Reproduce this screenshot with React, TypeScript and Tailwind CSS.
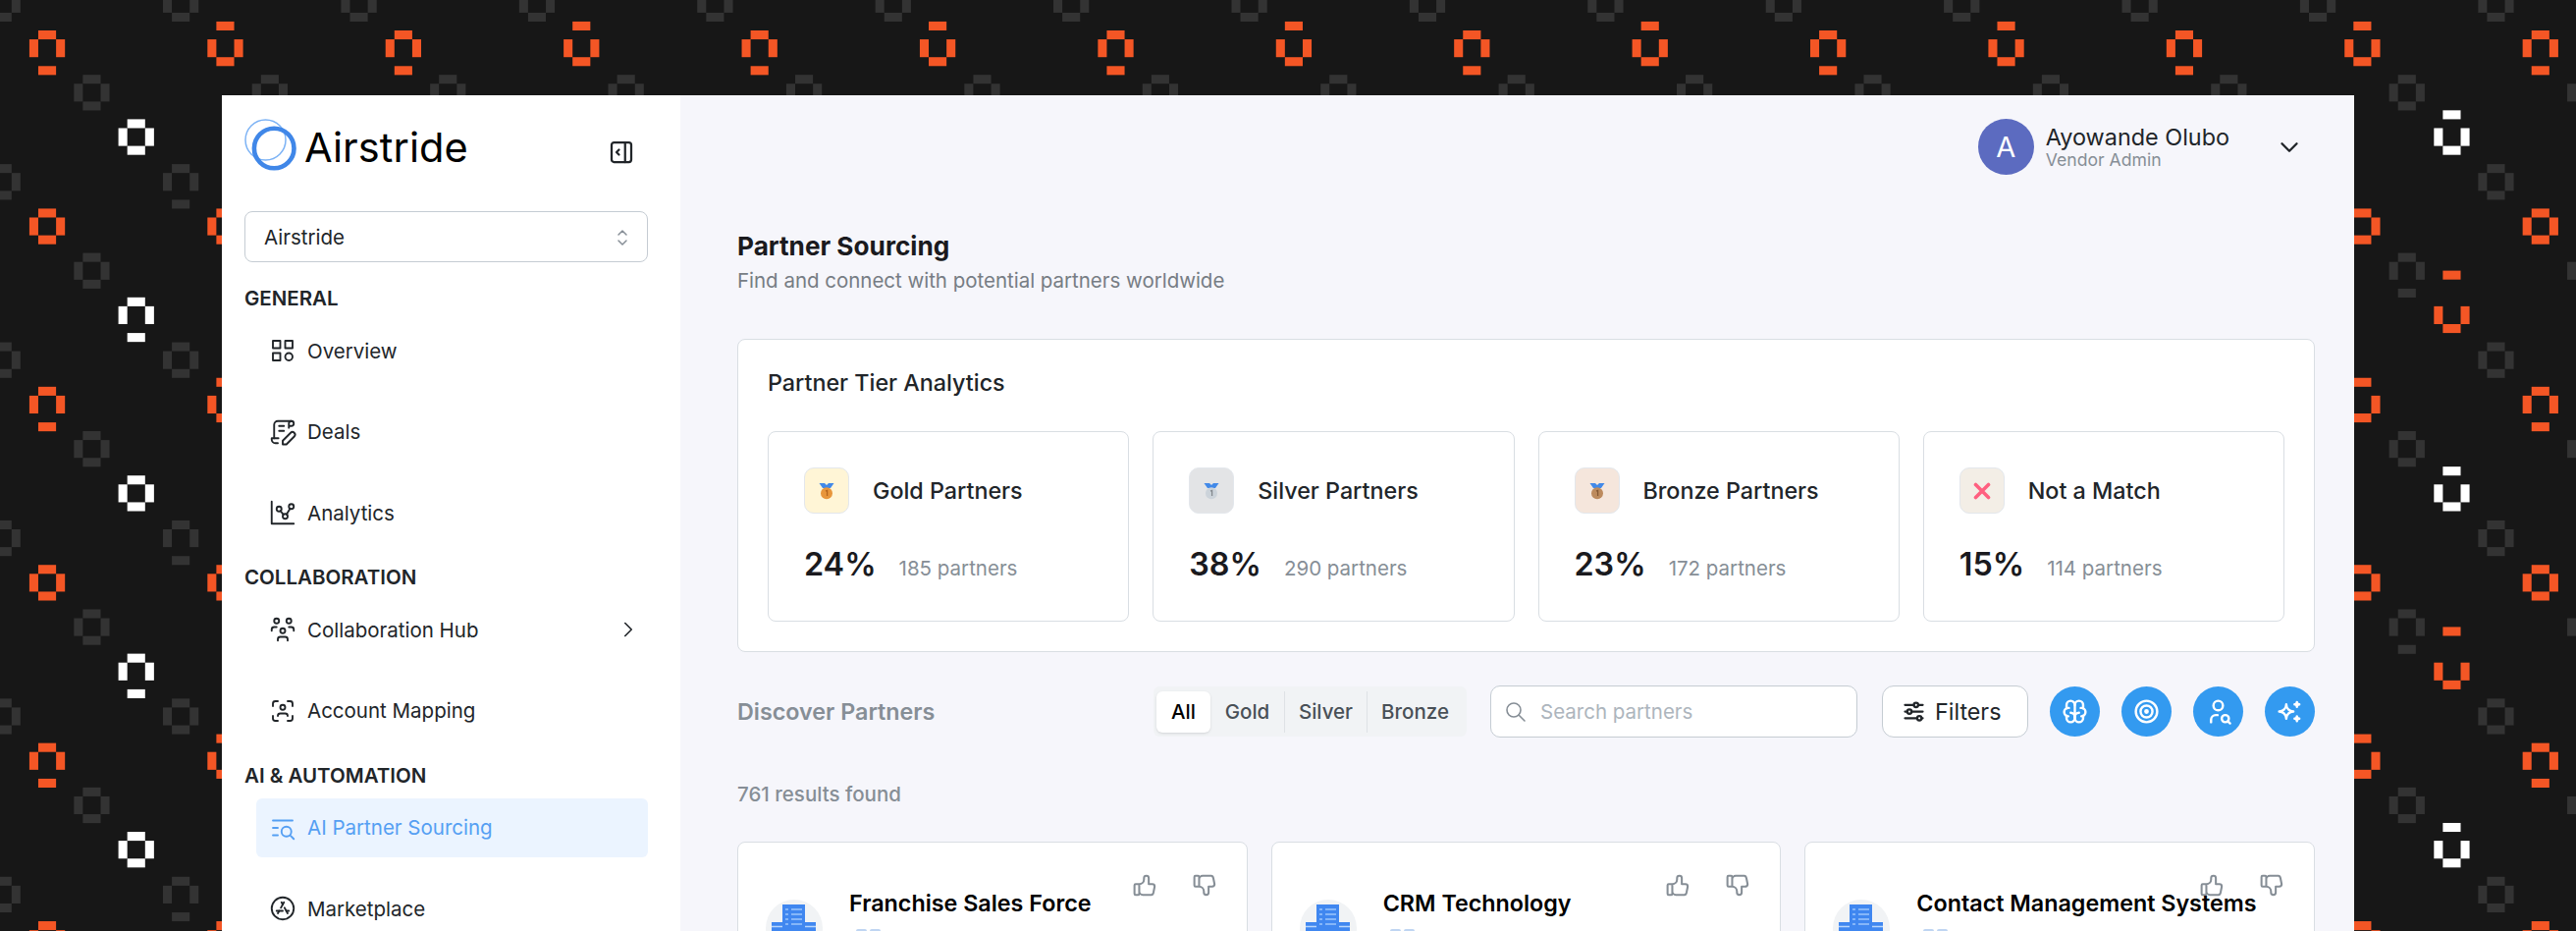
import type { IconType } from 'react-icons'
import {
  TbAdjustmentsHorizontal,
  TbBrain,
  TbBrandAppstore,
  TbCategory,
  TbChartDots,
  TbChevronDown,
  TbChevronRight,
  TbContract,
  TbLayoutSidebarRightExpand,
  TbListSearch,
  TbSearch,
  TbSelector,
  TbSparkles,
  TbTarget,
  TbThumbDown,
  TbThumbUp,
  TbUserScan,
  TbUserSearch,
  TbUsersGroup,
} from 'react-icons/tb'

type NavItem = { label: string; icon: IconType; active?: boolean; expandable?: boolean }
type NavSection = { title: string; items: NavItem[] }
type Medal = 'gold' | 'silver' | 'bronze' | 'none'
type Tier = { name: string; percent: string; count: string; medal: Medal; tint: string }

const navSections: NavSection[] = [
  {
    title: 'GENERAL',
    items: [
      { label: 'Overview', icon: TbCategory },
      { label: 'Deals', icon: TbContract },
      { label: 'Analytics', icon: TbChartDots },
    ],
  },
  {
    title: 'COLLABORATION',
    items: [
      { label: 'Collaboration Hub', icon: TbUsersGroup, expandable: true },
      { label: 'Account Mapping', icon: TbUserScan },
    ],
  },
  {
    title: 'AI & AUTOMATION',
    items: [
      { label: 'AI Partner Sourcing', icon: TbListSearch, active: true },
      { label: 'Marketplace', icon: TbBrandAppstore },
    ],
  },
]

const tiers: Tier[] = [
  { name: 'Gold Partners', percent: '24%', count: '185 partners', medal: 'gold', tint: 'bg-[#fff5d6]' },
  { name: 'Silver Partners', percent: '38%', count: '290 partners', medal: 'silver', tint: 'bg-[#e3e4e6]' },
  { name: 'Bronze Partners', percent: '23%', count: '172 partners', medal: 'bronze', tint: 'bg-[#f5e6dc]' },
  { name: 'Not a Match', percent: '15%', count: '114 partners', medal: 'none', tint: 'bg-[#f3eee6]' },
]

const partners = ['Franchise Sales Force', 'CRM Technology', 'Contact Management Systems']
const quickActions = [TbBrain, TbTarget, TbUserSearch, TbSparkles]

// ─── Backdrop ───

const UNIT = 9.07
const STEP = 181.41

type Glyph = { x: number; y: number; fill: string; up?: number; down?: number }

const range = (from: number, to: number) => Array.from({ length: to - from + 1 }, (_, i) => from + i)

const glyphs: Glyph[] = [
  ...range(0, 14).flatMap((col) =>
    range(0, 5).map((row) => ({
      x: 29.9 + col * STEP,
      y: 31 + row * STEP,
      fill: '#f45625',
      up: row % 2 === 0 && col % 2 === 1 ? 1 : 0,
      down: row % 2 === 0 && col % 2 === 0 ? 1 : 0,
    })),
  ),
  ...range(0, 14).flatMap((col) =>
    range(0, 4).map((row) => ({
      x: 75.3 + col * STEP,
      y: 76.2 + row * STEP,
      fill: '#333333',
      down: col === 13 && row % 2 === 1 ? 1 : 0,
    })),
  ),
  ...range(-1, 13).flatMap((col) =>
    range(0, 5).map((row) => ({
      x: 166 + col * STEP,
      y: -14.3 + row * STEP,
      fill: '#333333',
      down: col === 0 && row % 2 === 1 ? 1 : 0,
    })),
  ),
  ...range(0, 4).map((row) => ({ x: 120.6, y: 121.4 + row * STEP, fill: '#ffffff', down: row % 2 })),
  ...range(0, 4).map((row) => ({
    x: 2479.3,
    y: 121.4 + row * STEP,
    fill: row % 2 ? '#f45625' : '#ffffff',
    up: row % 2 ? 3 : 1,
  })),
]

const Backdrop = () => (
  <svg className="absolute inset-0" width="2624" height="948" viewBox="0 0 2624 948">
    {glyphs.map(({ x, y, fill, up = 0, down = 0 }, i) => (
      <g key={i} fill={fill} transform={`translate(${x} ${y})`}>
        <rect x={UNIT} y={-up * UNIT} width={UNIT * 2} height={UNIT} />
        <rect x={0} y={UNIT} width={UNIT} height={UNIT * 2} />
        <rect x={UNIT * 3} y={UNIT} width={UNIT} height={UNIT * 2} />
        <rect x={UNIT} y={(3 + down) * UNIT} width={UNIT * 2} height={UNIT} />
      </g>
    ))}
  </svg>
)

// ─── Drawings ───

const LogoMark = () => (
  <svg width="54" height="54" viewBox="0 0 54 54" fill="none">
    <circle cx="21.5" cy="21.5" r="20.5" stroke="#7db3f5" strokeWidth="1.5" />
    <circle cx="30.2" cy="30" r="20.3" stroke="#4087e8" strokeWidth="4.6" />
  </svg>
)

const medalColors = {
  gold: { disc: '#e8963c', mark: '#b5651d' },
  silver: { disc: '#ccd3da', mark: '#84898f' },
  bronze: { disc: '#bd8b5e', mark: '#855a34' },
}

const MedalIcon = ({ medal }: { medal: Medal }) => {
  if (medal === 'none') {
    return (
      <svg width="18" height="18" viewBox="0 0 18 18" fill="none">
        <path d="M2.5 2.5 15.5 15.5M15.5 2.5 2.5 15.5" stroke="#ff6080" strokeWidth="3.6" strokeLinecap="round" />
      </svg>
    )
  }
  const { disc, mark } = medalColors[medal]
  return (
    <svg width="18" height="18" viewBox="0 0 18 18">
      <path d="M1.5 1h5.5l2 2L11 1h5.5L13 6H5z" fill="#4289e8" />
      <circle cx="9" cy="11.2" r="6" fill={disc} />
      <path d="M8 9.2 9.6 8.5V14" stroke={mark} strokeWidth="1.3" fill="none" />
    </svg>
  )
}

const BuildingIcon = () => (
  <svg width="60" height="60" viewBox="0 0 60 60">
    <circle cx="31" cy="30" r="29" fill="#f1f3f5" />
    <path d="M19 6h23v54H19z" fill="#4087f0" />
    <path d="M8 24h45v36H8z" fill="#4087f0" />
    <path d="M22 11h3m3 0h11M22 16h3m3 0h11M22 21h3m3 0h11M22 26h3m3 0h11" stroke="#9cc6fb" strokeWidth="1.6" />
    <path d="M8 28.5h11M42 28.5h11" stroke="#b9d7fc" strokeWidth="1.6" />
  </svg>
)

// ─── Layout ───

const Sidebar = () => (
  <aside className="flex w-[467px] shrink-0 flex-col bg-white pl-[23px] pr-[33px] pt-6">
    <div className="flex h-[54px] items-start">
      <LogoMark />
      <span className="ml-[7px] text-[41.5px] leading-[59px] tracking-[0.1px] text-black">Airstride</span>
      <TbLayoutSidebarRightExpand size={30} strokeWidth={1.8} className="ml-auto mr-3 mt-[19px]" />
    </div>
    <div className="mt-10 flex h-[52px] shrink-0 items-center justify-between rounded-lg border-[1.5px] border-[#c5ccd3] pl-[19px] pr-[13px] pt-px">
      <span>Airstride</span>
      <TbSelector size={24} strokeWidth={1.5} className="text-[#868e96]" />
    </div>
    <nav className="mt-[13px] flex flex-col gap-3">
      {navSections.map((section) => (
        <section key={section.title}>
          <h2 className="h-[47px] font-semibold leading-[47px]">{section.title}</h2>
          <ul className="flex flex-col gap-[22.5px] pl-3">
            {section.items.map(({ label, icon: Icon, active, expandable }) => (
              <li
                key={label}
                className={`flex h-[60px] items-center rounded-md pl-3 ${active ? 'bg-[#ebf4ff] text-[#559ff3]' : ''}`}
              >
                <Icon size={30} strokeWidth={1.5} />
                <span className="ml-[10px] mt-px">{label}</span>
                {expandable && <TbChevronRight size={26} strokeWidth={1.5} className="ml-auto mr-[7px]" />}
              </li>
            ))}
          </ul>
        </section>
      ))}
    </nav>
  </aside>
)

const UserBar = () => (
  <header className="flex h-[57px] items-center">
    <div className="ml-auto flex size-[57px] items-center justify-center rounded-full bg-[#5c6bc0] text-[29px] text-white">
      A
    </div>
    <div className="ml-3 flex flex-col">
      <span className="text-[23.4px] leading-[26px]">Ayowande Olubo</span>
      <span className="text-[17.6px] leading-5 text-[#868e96]">Vendor Admin</span>
    </div>
    <TbChevronDown size={30} strokeWidth={1.9} className="ml-[46px] mr-[11px]" />
  </header>
)

const TierAnalytics = () => (
  <section className="mt-[44px] h-[319px] rounded-lg border-[1.5px] border-[#d9dee3] bg-white px-[30px] pt-[26px]">
    <h2 className="text-[23.3px] font-medium leading-9">Partner Tier Analytics</h2>
    <div className="mt-[31px] grid grid-cols-4 gap-6">
      {tiers.map((tier) => (
        <article key={tier.name} className="h-[194px] rounded-lg border-[1.5px] border-[#d9dee3] pl-9 pt-9">
          <div className="flex items-center">
            <div className={`flex h-[47px] w-[46px] items-center justify-center rounded-[10px] border-[1.5px] border-[#e3e7ec] ${tier.tint}`}>
              <MedalIcon medal={tier.medal} />
            </div>
            <span className="ml-6 text-[23.3px] font-medium">{tier.name}</span>
          </div>
          <div className="mt-[27px] flex items-baseline gap-[23px]">
            <span className="text-[32.3px] font-semibold leading-[50px] text-[#1a1a1e]">{tier.percent}</span>
            <span className="text-[#868e96]">{tier.count}</span>
          </div>
        </article>
      ))}
    </div>
  </section>
)

const Toolbar = () => (
  <div className="mt-[34px] flex h-[53px] items-center">
    <h2 className="w-[424px] text-[23.3px] font-semibold text-[#868e96]">Discover Partners</h2>
    <div className="flex h-[51px] w-[319px] items-center rounded-md bg-[#f1f3f5] pl-[3px] font-medium text-[#495057]">
      <span className="flex h-[42px] w-[55px] items-center justify-center rounded-md bg-white text-black shadow-sm">All</span>
      <span className="flex h-[42px] w-[75px] items-center justify-center">Gold</span>
      <span className="flex h-[42px] w-[84px] items-center justify-center border-l-[1.5px] border-[#dee2e6]">Silver</span>
      <span className="flex h-[42px] w-[98px] items-center justify-center border-l-[1.5px] border-[#dee2e6]">Bronze</span>
    </div>
    <label className="ml-6 flex h-[53px] w-[374px] items-center rounded-[10px] border-[1.5px] border-[#c5ccd3] bg-white pl-[13px]">
      <TbSearch size={24} strokeWidth={1.6} className="text-[#868e96]" />
      <input
        className="ml-[13px] w-[300px] bg-transparent outline-none placeholder:text-[#adb5bd]"
        placeholder="Search partners"
      />
    </label>
    <button
      type="button"
      className="ml-[25px] flex h-[53px] w-[149px] items-center gap-2 rounded-xl border-[1.5px] border-[#c5ccd3] bg-white pl-[18px] text-[23.3px]"
    >
      <TbAdjustmentsHorizontal size={27} />
      Filters
    </button>
    <div className="ml-auto flex gap-[22px]">
      {quickActions.map((Icon, i) => (
        <button key={i} type="button" className="flex size-[51px] items-center justify-center rounded-full bg-[#339af0] text-white">
          <Icon size={29} />
        </button>
      ))}
    </div>
  </div>
)

const PartnerCard = ({ name }: { name: string }) => (
  <article className="relative h-[300px] rounded-lg border-[1.5px] border-[#d9dee3] bg-white pl-[26px] pt-[44px]">
    <div className="absolute right-[28px] top-[29px] flex gap-8 text-[#868e96]">
      <TbThumbUp size={29} strokeWidth={1.7} />
      <TbThumbDown size={29} strokeWidth={1.7} />
    </div>
    <div className="flex">
      <div className="mt-[13px] shrink-0">
        <BuildingIcon />
      </div>
      <div className="ml-[27px]">
        <h3 className="relative whitespace-nowrap text-[23.3px] font-semibold leading-9 text-black">{name}</h3>
        <div className="mt-2 flex gap-[3px] pl-[7px]">
          <span className="h-4 w-[11px] rounded-xs bg-[#bfd5f2]" />
          <span className="h-4 w-[11px] rounded-xs bg-[#bfd5f2]" />
        </div>
      </div>
    </div>
  </article>
)

const App = () => (
  <div className="relative h-[948px] w-[2624px] overflow-hidden bg-[#171717] pl-[226px] pt-[97px] font-[Inter,sans-serif] text-[20.5px] leading-[30px] text-[#212529]">
    <Backdrop />
    <div className="relative flex h-[851px] w-[2172px] overflow-hidden">
      <Sidebar />
      <main className="flex-1 bg-[#f6f6fb] pl-[58px] pr-10 pt-6">
        <UserBar />
        <div className="mt-[54px]">
          <h1 className="text-[26.2px] font-bold leading-[38px] text-[#1a1a1e]">Partner Sourcing</h1>
          <p className="mt-px leading-[30px] tracking-[-0.02px] text-[#777d84]">Find and connect with potential partners worldwide</p>
        </div>
        <TierAnalytics />
        <Toolbar />
        <p className="mt-[43px] font-medium text-[#868e96]">761 results found</p>
        <div className="mt-[33px] grid grid-cols-3 gap-6">
          {partners.map((name) => (
            <PartnerCard key={name} name={name} />
          ))}
        </div>
      </main>
    </div>
  </div>
)

export default App
